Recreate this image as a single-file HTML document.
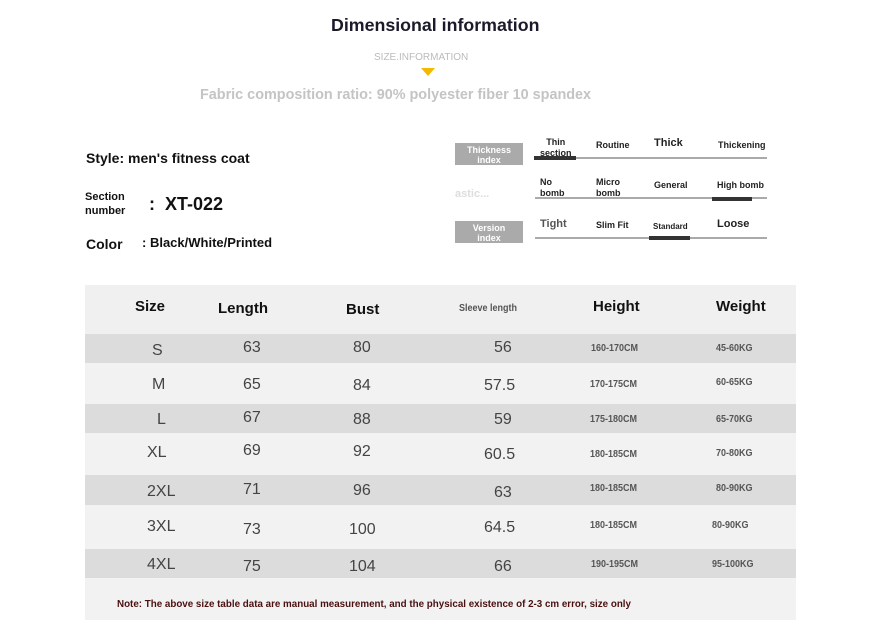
<!DOCTYPE html>
<html><head><meta charset="utf-8"><style>
*{margin:0;padding:0;box-sizing:border-box}
body{width:879px;height:625px;background:#fff;font-family:"Liberation Sans",Arial,sans-serif;position:relative;overflow:hidden}
.a{position:absolute;white-space:nowrap}
.b{font-weight:bold}
.row{position:absolute;left:85px;width:711px}
.hd{font-weight:bold;color:#111;font-size:15px}
.n{font-size:16px;color:#444}
.s{font-size:10px;color:#555;font-weight:bold;transform:scaleX(.9);transform-origin:left}
.gl{position:absolute;height:2px;background:#aaa}
.bk{position:absolute;height:4px;background:#333}
.tag{position:absolute;background:#aaa;color:#fff;font-size:9px;font-weight:bold;text-align:center;line-height:10px;padding-top:2px}
.lb{position:absolute;font-size:9px;font-weight:bold;color:#222;line-height:11px;text-align:left}
</style></head><body>
<div class="a b" style="left:331px;top:15px;font-size:17.8px;color:#1a1a2a">Dimensional information</div>
<div class="a" style="left:374px;top:52px;font-size:10px;color:#bbb">SIZE.INFORMATION</div>
<div class="a" style="left:421px;top:68px;width:0;height:0;border-left:7px solid transparent;border-right:7px solid transparent;border-top:8px solid #f5b800"></div>
<div class="a b" style="left:200px;top:87px;font-size:14.4px;color:#c4c4c4">Fabric composition ratio: 90% polyester fiber 10 spandex</div>

<div class="a b" style="left:86px;top:150px;font-size:14px;color:#111">Style: men's fitness coat</div>
<div class="a b" style="left:85px;top:190px;font-size:11px;line-height:14px;color:#111">Section<br>number</div>
<div class="a b" style="left:149px;top:194px;font-size:18px;color:#111">:&nbsp; XT-022</div>
<div class="a b" style="left:86px;top:236px;font-size:14px;color:#111">Color</div>
<div class="a b" style="left:142px;top:235px;font-size:13px;color:#111">: Black/White/Printed</div>

<div class="tag" style="left:455px;top:143px;width:68px;height:22px">Thickness<br>index</div>
<div class="gl" style="left:535px;top:157px;width:232px"></div><div class="bk" style="left:534px;top:156px;width:42px"></div>
<div class="lb" style="left:540px;top:137px;text-align:center">Thin<br>section</div>
<div class="lb" style="left:596px;top:140px">Routine</div>
<div class="lb" style="left:654px;top:138px;font-size:11px">Thick</div>
<div class="lb" style="left:718px;top:140px">Thickening</div>

<div class="a b" style="left:455px;top:188px;font-size:11px;color:#ddd">astic...</div>
<div class="gl" style="left:535px;top:197px;width:232px"></div><div class="bk" style="left:712px;top:197px;width:40px"></div>
<div class="lb" style="left:540px;top:177px">No<br>bomb</div>
<div class="lb" style="left:596px;top:177px">Micro<br>bomb</div>
<div class="lb" style="left:654px;top:180px">General</div>
<div class="lb" style="left:717px;top:180px">High bomb</div>

<div class="tag" style="left:455px;top:221px;width:68px;height:22px">Version<br>index</div>
<div class="gl" style="left:535px;top:237px;width:232px"></div><div class="bk" style="left:649px;top:236px;width:41px"></div>
<div class="lb" style="left:540px;top:219px;font-size:11px;color:#555">Tight</div>
<div class="lb" style="left:596px;top:220px">Slim Fit</div>
<div class="lb" style="left:653px;top:221px;font-size:8px">Standard</div>
<div class="lb" style="left:717px;top:219px;font-size:11px">Loose</div>

<div class="row" style="top:285px;height:49px;background:#f0f0f0"></div>
<div class="row" style="top:334px;height:29px;background:#dcdcdc"></div>
<div class="row" style="top:363px;height:41px;background:#f2f2f2"></div>
<div class="row" style="top:404px;height:29px;background:#dcdcdc"></div>
<div class="row" style="top:433px;height:42px;background:#f2f2f2"></div>
<div class="row" style="top:475px;height:30px;background:#dcdcdc"></div>
<div class="row" style="top:505px;height:44px;background:#f2f2f2"></div>
<div class="row" style="top:549px;height:29px;background:#dcdcdc"></div>
<div class="row" style="top:578px;height:42px;background:#f2f2f2"></div>

<div class="a hd" style="left:135px;top:298px">Size</div>
<div class="a hd" style="left:218px;top:300px">Length</div>
<div class="a hd" style="left:346px;top:301px">Bust</div>
<div class="a s" style="left:459px;top:303px">Sleeve length</div>
<div class="a hd" style="left:593px;top:298px">Height</div>
<div class="a hd" style="left:716px;top:298px">Weight</div>

<div class="a n" style="left:152px;top:342px">S</div><div class="a n" style="left:243px;top:339px">63</div><div class="a n" style="left:353px;top:339px">80</div><div class="a n" style="left:494px;top:339px">56</div><div class="a s" style="left:591px;top:343px">160-170CM</div><div class="a s" style="left:716px;top:343px">45-60KG</div>
<div class="a n" style="left:152px;top:376px">M</div><div class="a n" style="left:243px;top:376px">65</div><div class="a n" style="left:353px;top:377px">84</div><div class="a n" style="left:484px;top:377px">57.5</div><div class="a s" style="left:590px;top:379px">170-175CM</div><div class="a s" style="left:716px;top:377px">60-65KG</div>
<div class="a n" style="left:157px;top:411px">L</div><div class="a n" style="left:243px;top:409px">67</div><div class="a n" style="left:353px;top:411px">88</div><div class="a n" style="left:494px;top:411px">59</div><div class="a s" style="left:590px;top:414px">175-180CM</div><div class="a s" style="left:716px;top:414px">65-70KG</div>
<div class="a n" style="left:147px;top:444px">XL</div><div class="a n" style="left:243px;top:442px">69</div><div class="a n" style="left:353px;top:443px">92</div><div class="a n" style="left:484px;top:446px">60.5</div><div class="a s" style="left:590px;top:449px">180-185CM</div><div class="a s" style="left:716px;top:448px">70-80KG</div>
<div class="a n" style="left:147px;top:483px">2XL</div><div class="a n" style="left:243px;top:481px">71</div><div class="a n" style="left:353px;top:482px">96</div><div class="a n" style="left:494px;top:484px">63</div><div class="a s" style="left:590px;top:483px">180-185CM</div><div class="a s" style="left:716px;top:483px">80-90KG</div>
<div class="a n" style="left:147px;top:518px">3XL</div><div class="a n" style="left:243px;top:521px">73</div><div class="a n" style="left:349px;top:521px">100</div><div class="a n" style="left:484px;top:519px">64.5</div><div class="a s" style="left:590px;top:520px">180-185CM</div><div class="a s" style="left:712px;top:520px">80-90KG</div>
<div class="a n" style="left:147px;top:556px">4XL</div><div class="a n" style="left:243px;top:558px">75</div><div class="a n" style="left:349px;top:558px">104</div><div class="a n" style="left:494px;top:558px">66</div><div class="a s" style="left:591px;top:559px">190-195CM</div><div class="a s" style="left:712px;top:559px">95-100KG</div>

<div class="a b" style="left:117px;top:599px;font-size:9.8px;color:#4a1010">Note: The above size table data are manual measurement, and the physical existence of 2-3 cm error, size only</div>
</body></html>
